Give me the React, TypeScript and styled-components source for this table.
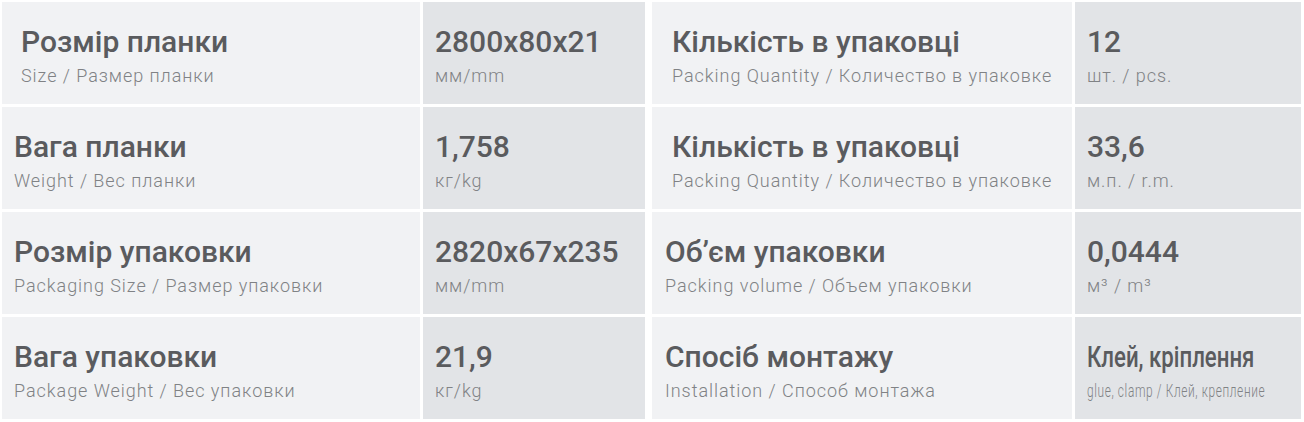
import React from "react";
import styled, { createGlobalStyle } from "styled-components";

const GlobalStyle = createGlobalStyle`
  html, body {
    margin: 0;
    padding: 0;
    background: #ffffff;
  }
  body {
    font-family: Roboto, "Noto Sans", sans-serif;
  }
`;

const Page = styled.div`
  display: flex;
  gap: 7px;
  padding: 2px 0 0 2px;
  width: 1304px;
  height: 422px;
  box-sizing: border-box;
  background: #ffffff;
`;

const Table = styled.div<{ $label: number; $value: number }>`
  display: grid;
  grid-template-columns: ${(p) => p.$label}px ${(p) => p.$value}px;
  grid-auto-rows: 102px;
  gap: 3px;
`;

const LabelCell = styled.div<{ $indent: number }>`
  background: #f1f2f4;
  padding: 22px 0 0 ${(p) => p.$indent}px;
  box-sizing: border-box;
  display: flex;
  flex-direction: column;
  align-items: flex-start;
`;

const ValueCell = styled.div`
  background: #e2e4e7;
  padding: 22px 0 0 12px;
  box-sizing: border-box;
  display: flex;
  flex-direction: column;
  align-items: flex-start;
  overflow: hidden;
`;

const Title = styled.div<{ $squeeze?: number }>`
  font-family: Roboto, "Noto Sans", sans-serif;
  font-size: 30px;
  line-height: 35px;
  font-weight: 500;
  color: #5a5b5e;
  white-space: nowrap;
  transform: scaleX(${(p) => p.$squeeze ?? 1});
  transform-origin: left center;
`;

const Sub = styled.div<{ $squeeze?: number }>`
  margin-top: 7px;
  font-family: Roboto, "Noto Sans", sans-serif;
  font-size: 18px;
  line-height: 20px;
  font-weight: 300;
  letter-spacing: 0.95px;
  color: #808285;
  white-space: nowrap;
  transform: scaleX(${(p) => p.$squeeze ?? 1});
  transform-origin: left center;
`;

type Row = {
  title: string;
  sub: string;
  value: string;
  unit: string;
  indent: number;
  squeezeValue?: number;
  squeezeUnit?: number;
};

const left: Row[] = [
  { title: "Розмір планки", sub: "Size / Размер планки", value: "2800x80x21", unit: "мм/mm", indent: 19 },
  { title: "Вага планки", sub: "Weight / Вес планки", value: "1,758", unit: "кг/kg", indent: 12 },
  { title: "Розмір упаковки", sub: "Packaging Size / Размер упаковки", value: "2820x67x235", unit: "мм/mm", indent: 12 },
  { title: "Вага упаковки", sub: "Package Weight / Вес упаковки", value: "21,9", unit: "кг/kg", indent: 12 },
];

const right: Row[] = [
  { title: "Кількість в упаковці", sub: "Packing Quantity / Количество в упаковке", value: "12", unit: "шт. / pcs.", indent: 20 },
  { title: "Кількість в упаковці", sub: "Packing Quantity / Количество в упаковке", value: "33,6", unit: "м.п. / r.m.", indent: 20 },
  { title: "Об’єм упаковки", sub: "Packing volume / Объем упаковки", value: "0,0444", unit: "м³ / m³", indent: 13 },
  {
    title: "Спосіб монтажу",
    sub: "Installation / Способ монтажа",
    value: "Клей, кріплення",
    unit: "glue, clamp / Клей, крепление",
    indent: 13,
    squeezeValue: 0.74,
    squeezeUnit: 0.66,
  },
];

const renderRows = (rows: Row[]) =>
  rows.map((r, i) => (
    <React.Fragment key={i}>
      <LabelCell $indent={r.indent}>
        <Title>{r.title}</Title>
        <Sub>{r.sub}</Sub>
      </LabelCell>
      <ValueCell>
        <Title $squeeze={r.squeezeValue}>{r.value}</Title>
        <Sub $squeeze={r.squeezeUnit}>{r.unit}</Sub>
      </ValueCell>
    </React.Fragment>
  ));

export default function App() {
  return (
    <>
      <GlobalStyle />
      <Page>
        <Table $label={418} $value={222}>
          {renderRows(left)}
        </Table>
        <Table $label={420} $value={226}>
          {renderRows(right)}
        </Table>
      </Page>
    </>
  );
}
